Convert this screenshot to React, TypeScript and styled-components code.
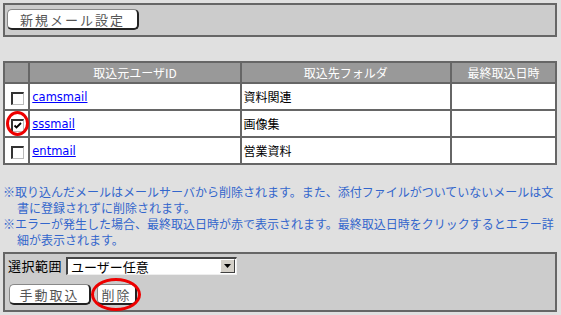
import React from 'react';
import styled, { createGlobalStyle } from 'styled-components';

const GlobalStyle = createGlobalStyle`
  html, body {
    margin: 0;
    padding: 0;
    background: #e0e0e0;
  }
  body {
    font-family: "Noto Sans CJK JP", "DejaVu Sans", sans-serif;
    font-size: 12px;
    color: #000;
  }
`;

const Page = styled.div`
  width: 561px;
  height: 315px;
  box-sizing: border-box;
  padding: 3px 4px 0 3px;
  display: flex;
  flex-direction: column;
  overflow: hidden;
`;

const Panel = styled.div<{ $height: number }>`
  position: relative;
  box-sizing: border-box;
  height: ${p => p.$height}px;
  border: 2px solid #666;
  background: #cccccc;
  padding: 2px 2px;
  display: flex;
  flex-direction: column;
  gap: 6px;
`;

const Button = styled.button<{ $width: number }>`
  position: relative;
  box-sizing: border-box;
  width: ${p => p.$width}px;
  height: 21px;
  padding: 0;
  background: #fff;
  border: 1px solid #888;
  border-right: 2px solid #222;
  border-bottom: 2px solid #222;
  border-radius: 5px;
  font-family: "Noto Sans CJK JP", sans-serif;
  font-size: 13px;
  letter-spacing: 2px;
  color: #555;
  line-height: 17px;
  text-align: center;
`;

const Table = styled.table`
  margin-top: 24px;
  border-collapse: collapse;
  width: 554px;
  border: 2px solid #666;
  background: #fff;
`;

const Th = styled.th<{ $width: number }>`
  width: ${p => p.$width}px;
  height: 19px;
  padding: 0;
  background: #999;
  color: #fff;
  font-weight: normal;
  font-size: 12px;
  line-height: 16px;
  border: 2px solid #666;
  text-align: center;
`;

const Td = styled.td<{ $center?: boolean }>`
  position: relative;
  height: 25px;
  padding: 0 0 0 2px;
  border: 2px solid #666;
  text-align: ${p => (p.$center ? 'center' : 'left')};
  font-size: 12px;
  line-height: 16px;
  vertical-align: middle;
`;

const Link = styled.a`
  font-family: "DejaVu Sans", sans-serif;
  font-size: 11.5px;
  color: #0000ff;
  text-decoration: underline;
`;

const Check = styled.span`
  display: inline-block;
  box-sizing: border-box;
  width: 13px;
  height: 13px;
  vertical-align: middle;
  background: #fff;
  border-top: 2px solid #333;
  border-left: 2px solid #333;
  border-right: 1px solid #bbb;
  border-bottom: 1px solid #bbb;
  position: relative;
  svg {
    position: absolute;
    left: 0;
    top: 0;
  }
`;

const Ring = styled.span<{ $w: number; $h: number; $l: number; $t: number }>`
  position: absolute;
  left: ${p => p.$l}px;
  top: ${p => p.$t}px;
  width: ${p => p.$w}px;
  height: ${p => p.$h}px;
  box-sizing: border-box;
  border: 3px solid #ee0000;
  border-radius: 50%;
  pointer-events: none;
`;

const Notes = styled.div`
  margin-top: 19px;
  color: #3366cc;
  font-size: 12px;
  line-height: 16px;
  height: 68px;
`;

const Note = styled.p`
  margin: 0;
  padding-left: 14px;
  text-indent: -14px;
  word-break: break-all;
`;

const Row = styled.div`
  display: flex;
  align-items: center;
  gap: 4px;
  padding-left: 1px;
`;

const Label = styled.span`
  font-size: 13px;
  letter-spacing: 0.5px;
`;

const Select = styled.div`
  box-sizing: border-box;
  width: 171px;
  height: 18px;
  background: #fff;
  border-top: 2px solid #444;
  border-left: 2px solid #444;
  border-right: 1px solid #eee;
  border-bottom: 1px solid #eee;
  display: flex;
  align-items: center;
  justify-content: space-between;
  font-size: 13px;
  padding-left: 3px;
`;

const Arrow = styled.span`
  box-sizing: border-box;
  width: 15px;
  height: 14px;
  margin-right: 1px;
  background: #d4d0c8;
  border: 1px solid #fff;
  border-right-color: #404040;
  border-bottom-color: #404040;
  display: flex;
  align-items: center;
  justify-content: center;
`;

const ButtonRow = styled.div`
  display: flex;
  gap: 6px;
  padding-left: 2px;
  margin-top: 3px;
`;

const rows = [
  { id: 'camsmail', folder: '資料関連', checked: false },
  { id: 'sssmail', folder: '画像集', checked: true },
  { id: 'entmail', folder: '営業資料', checked: false },
];

export default function App() {
  return (
    <Page>
      <GlobalStyle />
      <Panel $height={34}>
        <Button $width={132} style={{ marginTop: 2 }}>新規メール設定</Button>
      </Panel>

      <Table>
        <thead>
          <tr>
            <Th $width={23}></Th>
            <Th $width={207}>取込元ユーザID</Th>
            <Th $width={206}>取込先フォルダ</Th>
            <Th $width={102}>最終取込日時</Th>
          </tr>
        </thead>
        <tbody>
          {rows.map(r => (
            <tr key={r.id}>
              <Td $center>
                <Check>
                  {r.checked && (
                    <svg width="10" height="10" viewBox="0 0 10 10">
                      <path d="M1.5 4.5 L3.5 6.5 L8 2" stroke="#000" strokeWidth="1.8" fill="none" />
                    </svg>
                  )}
                </Check>
                {r.checked && <Ring $w={23} $h={25} $l={1} $t={0} />}
              </Td>
              <Td><Link href="#">{r.id}</Link></Td>
              <Td>{r.folder}</Td>
              <Td></Td>
            </tr>
          ))}
        </tbody>
      </Table>

      <Notes>
        <Note>※取り込んだメールはメールサーバから削除されます。また、添付ファイルがついていないメールは文書に登録されずに削除されます。</Note>
        <Note>※エラーが発生した場合、最終取込日時が赤で表示されます。最終取込日時をクリックするとエラー詳細が表示されます。</Note>
      </Notes>

      <Panel $height={60}>
        <Row>
          <Label>選択範囲</Label>
          <Select>
            <span>ユーザー任意</span>
            <Arrow>
              <svg width="7" height="4" viewBox="0 0 7 4">
                <path d="M0 0 H7 L3.5 4 Z" fill="#000" />
              </svg>
            </Arrow>
          </Select>
        </Row>
        <ButtonRow>
          <Button $width={82}>手動取込</Button>
          <Button $width={40}>
            削除
            <Ring $w={50} $h={33} $l={-7} $t={-7} />
          </Button>
        </ButtonRow>
      </Panel>
    </Page>
  );
}
